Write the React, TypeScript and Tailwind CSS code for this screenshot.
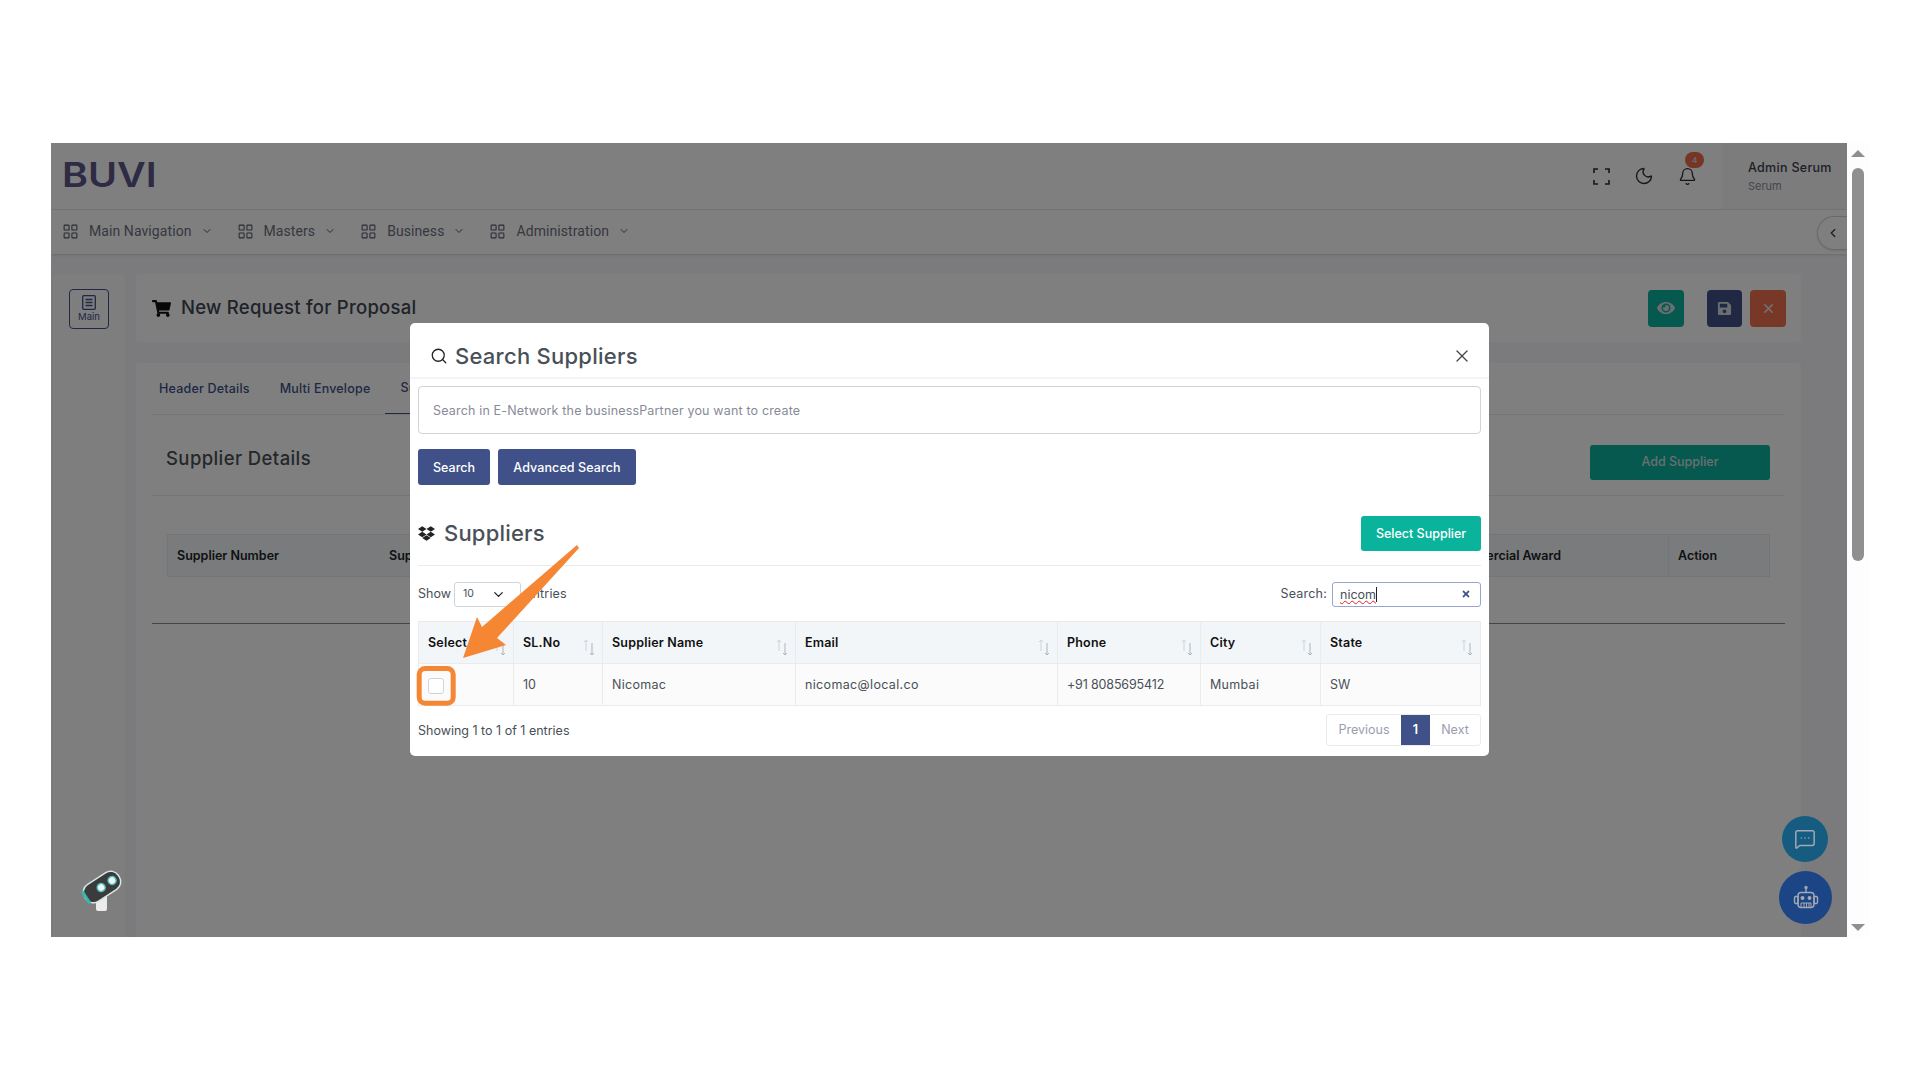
import { Bell, ChevronDown, ChevronLeft, LayoutGrid, MessageSquareMore, Moon, Search, X } from "lucide-react"
import { FaDropbox, FaEye, FaSave, FaShoppingCart, FaTimes } from "react-icons/fa"

const navItems = ["Main Navigation", "Masters", "Business", "Administration"]

const columns = [
    { label: "Select", value: "", width: "w-[95px]", cell: "" },
    { label: "SL.No", value: "10", width: "w-[89px]", cell: "" },
    { label: "Supplier Name", value: "Nicomac", width: "w-[193px]", cell: "tracking-[0.3px]" },
    { label: "Email", value: "nicomac@local.co", width: "w-[262px]", cell: "tracking-[0.35px]" },
    { label: "Phone", value: "+91 8085695412", width: "w-[143px]", cell: "tracking-[-0.15px]" },
    { label: "City", value: "Mumbai", width: "w-[120px]", cell: "tracking-[0.3px]" },
    { label: "State", value: "SW", width: "flex-1", cell: "" },
]

function SortArrows() {
    return (
        <svg className="absolute right-[7px] top-[17px]" width="12" height="17" viewBox="0 0 12 17" fill="none" strokeWidth="1">
            <path d="M3 12V1M1 3l2-2 2 2" stroke="#ced4da" />
            <path d="M9 4v12M7 14l2 2 2-2" stroke="#adb5bd" />
        </svg>
    )
}

function FullscreenIcon() {
    return (
        <svg width="17" height="17" viewBox="0 0 17 17" fill="none" stroke="#2c2c2c" strokeWidth="1.6">
            <path d="M1 5V1h4M12 1h4v4M16 12v4h-4M5 16H1v-4" />
        </svg>
    )
}

function ArticleIcon() {
    return (
        <svg width="14" height="15" viewBox="0 0 14 15" fill="none" stroke="#405189" strokeWidth="1.300">
            <rect x="0.700" y="0.700" width="12.600" height="13.600" rx="1" />
            <path d="M3.500 4.500h7M3.500 7.500h7M3.500 10.500h7" />
        </svg>
    )
}

function RobotIcon() {
    return (
        <svg width="28" height="28" viewBox="0 0 28 28" fill="none" stroke="#a3a9b5" strokeWidth="1.4">
            <rect x="6" y="8.500" width="16" height="15" rx="3" />
            <path d="M14 8.500V4M3.500 12.500h2.500v7H3.500a1.500 1.500 0 0 1-1-1.400v-4.200a1.500 1.500 0 0 1 1-1.400zM24.500 12.500H22v7h2.500a1.500 1.500 0 0 0 1-1.400v-4.200a1.500 1.500 0 0 0-1-1.400z" />
            <circle cx="14" cy="3.500" r="1" fill="#a3a9b5" />
            <circle cx="10.500" cy="14" r="1.300" fill="#a3a9b5" />
            <circle cx="17.500" cy="14" r="1.300" fill="#a3a9b5" />
            <path d="M9 23.500v-4.500h10v4.500M12 19v4.500M14.500 19v4.500M17 19v4.500" strokeWidth="1" />
        </svg>
    )
}

function CameraLogo() {
    return (
        <svg className="absolute left-[29px] top-[726px]" width="46" height="44" viewBox="0 0 46 44">
            <rect x="16" y="26" width="11" height="16" rx="2" fill="#ececec" />
            <g transform="rotate(-33 22 18)">
                <rect x="2" y="8" width="40" height="20" rx="9" fill="#3b3b3b" stroke="#d5e6e5" strokeWidth="1.500" />
                <path d="M3 12v12" stroke="#38b5ae" strokeWidth="3" strokeLinecap="round" />
                <circle cx="21" cy="18" r="4" fill="#f2f2f2" stroke="#46c0bb" strokeWidth="1.500" />
                <circle cx="34" cy="18" r="4" fill="#f2f2f2" stroke="#46c0bb" strokeWidth="1.500" />
            </g>
        </svg>
    )
}

function PageBehind() {
    return (
        <div className="w-full h-full bg-[#f6f6fa] flex flex-col">
            <header className="h-[67px] shrink-0 bg-white border-b border-[#e9ebec] flex items-center">
                <div className="ml-[11px] -mt-[2px] origin-left scale-x-[1.16] text-[34px] leading-none font-semibold text-[#5c5788] [font-family:'Inter',sans-serif]">
                    BUVI
                </div>
                <div className="ml-auto flex items-center gap-[24px] pr-[25px]">
                    <FullscreenIcon />
                    <Moon size={20} strokeWidth={1.6} color="#2c2c2c" />
                    <div className="relative">
                        <Bell size={19} strokeWidth={1.6} color="#2c2c2c" />
                        <span className="absolute -top-[15px] left-[7px] w-[19px] h-[16px] rounded-full bg-[#ee6a4a] text-[#d5d5d5] text-[9px] font-semibold flex items-center justify-center">
                            4
                        </span>
                    </div>
                </div>
                <div className="w-[125px] h-full bg-[#f8f8fb] pl-[26px] pt-[16px] [font-family:'Inter',sans-serif]">
                    <div className="text-[12.500px] leading-[18px] font-medium tracking-[0.3px] text-[#3a3f4b] whitespace-nowrap">Admin Serum</div>
                    <div className="text-[11px] leading-[18px] text-[#8a8d9c]">Serum</div>
                </div>
            </header>

            <nav className="relative h-[44px] shrink-0 bg-white shadow-sm flex items-center pl-[11px] pb-[2px] text-[#6d7080] [font-family:'Roboto',sans-serif] text-[14px] tracking-[0.08px]">
                {navItems.map((item) => (
                    <div key={item} className="flex items-center mr-[24px]">
                        <LayoutGrid size={17} strokeWidth={1.500} color="#555866" />
                        <span className="ml-[10px] whitespace-nowrap">{item}</span>
                        <ChevronDown size={12} className="ml-[9px]" color="#555866" />
                    </div>
                ))}
                <div className="absolute right-0 top-[6px] w-[30px] h-[34px] rounded-l-full bg-white border border-r-0 border-[#d5d5d5] shadow-sm flex items-center justify-center">
                    <ChevronLeft size={14} strokeWidth={2.500} color="#444" />
                </div>
            </nav>

            <div className="flex-1 flex pt-[20px] pl-[2px] pr-[46px] gap-[11px] min-h-0">
                <aside className="relative w-[72px] shrink-0 bg-[#fcfcfd] rounded-t-[4px]">
                    <div className="absolute left-[16px] top-[15px] w-[40px] h-[40px] rounded-[4px] border border-[#405189] flex flex-col items-center pt-[5px] text-[#405189]">
                        <ArticleIcon />
                        <span className="text-[9.500px] leading-[14px] [font-family:'Inter',sans-serif]">Main</span>
                    </div>
                </aside>

                <main className="flex-1 flex flex-col gap-[21px] [font-family:'Inter',sans-serif]">
                    <div className="h-[68px] shrink-0 bg-white rounded-[4px] flex items-center pl-[16px] pr-[15px]">
                        <FaShoppingCart size={19} color="#111" />
                        <h1 className="ml-[10px] text-[18.500px] font-medium tracking-[0.25px] text-[#404653]">New Request for Proposal</h1>
                        <div className="ml-auto flex items-center">
                            <div className="w-[36px] h-[37px] rounded-[4px] bg-[#0ab39c] flex items-center justify-center mr-[23px]">
                                <FaEye size={18} color="#d7dde0" />
                            </div>
                            <div className="w-[35px] h-[37px] rounded-[4px] bg-[#405189] flex items-center justify-center mr-[8px]">
                                <FaSave size={15} color="#d7dde0" />
                            </div>
                            <div className="w-[36px] h-[37px] rounded-[4px] bg-[#f0714f] flex items-center justify-center">
                                <X size={15} strokeWidth={2.500} color="#e5e5e5" />
                            </div>
                        </div>
                    </div>

                    <div className="flex-1 bg-white rounded-t-[4px] px-[16px]">
                        <div className="h-[52px] pt-[1px] flex items-stretch gap-[30px] pl-[7px] text-[12.500px] font-medium tracking-[0.2px] text-[#405189] border-b border-[#e9ebec]">
                            <span className="flex items-center">Header Details</span>
                            <span className="flex items-center">Multi Envelope</span>
                            <span className="flex items-center -ml-[15px] px-[15px] border-b border-[#405189]">Suppliers</span>
                        </div>
                        <div className="h-[81px] flex items-center justify-between pl-[14px] pr-[15px] border-b border-[#e9ebec]">
                            <h2 className="pt-[8px] text-[18.500px] font-medium tracking-[0.4px] text-[#495057]">Supplier Details</h2>
                            <div className="w-[180px] h-[35px] rounded-[3px] bg-[#0ab39c] mt-[15px] flex items-center justify-center text-[12.500px] font-medium text-[#d9dee0]">
                                Add Supplier
                            </div>
                        </div>
                        <div className="pt-[38px] px-[15px] pb-[46px] border-b border-[#878a99]">
                            <div className="h-[43px] pt-[1px] bg-[#f3f6f9] border border-[#e9ebec] flex items-stretch text-[12.500px] font-semibold text-[#212529]">
                                <div className="w-[221px] pl-[9px] flex items-center">Supplier Number</div>
                                <div className="flex-1 flex items-center">Supplier Name</div>
                                <div className="w-[231px] pl-[9px] flex items-center border-r border-[#e9ebec]">Commercial Award</div>
                                <div className="w-[100px] pl-[9px] flex items-center">Action</div>
                            </div>
                        </div>
                    </div>
                </main>
            </div>
        </div>
    )
}

function SearchModal() {
    return (
        <div className="absolute left-[359px] top-[180px] w-[1079px] h-[433px] bg-white rounded-[5px] [font-family:'Inter',sans-serif]">
            <div className="h-[56px] border-b-2 border-[#f3f5f7] flex items-center pt-[12px] pl-[20px] pr-[17px]">
                <Search size={18} strokeWidth={1.700} color="#222" />
                <h3 className="ml-[7px] text-[22px] font-medium tracking-[0.26px] text-[#495057]">Search Suppliers</h3>
                <X size={20} strokeWidth={1.500} color="#444" className="ml-auto" />
            </div>
            <div className="px-[8px]">
                <div className="mt-[7px] h-[48px] pt-[2px] border border-[#ced4da] rounded-[4px] flex items-center pl-[14px] text-[12.500px] tracking-[0.17px] text-[#878a99]">
                    Search in E-Network the businessPartner you want to create
                </div>
                <div className="mt-[15px] flex gap-[8px]">
                    <div className="w-[72px] h-[36px] pt-[2px] rounded-[3px] bg-[#405189] text-white text-[12.500px] font-medium flex items-center justify-center">Search</div>
                    <div className="w-[138px] h-[36px] pt-[2px] rounded-[3px] bg-[#405189] text-white text-[12.500px] font-medium tracking-[0.1px] flex items-center justify-center">Advanced Search</div>
                </div>
                <div className="mt-[31px] h-[50px] pb-[15px] flex items-center justify-between border-b border-[#e9ebec]">
                    <div className="flex items-center">
                        <FaDropbox size={17} color="#222" />
                        <span className="ml-[9px] text-[22px] font-medium tracking-[0.2px] text-[#495057]">Suppliers</span>
                    </div>
                    <div className="w-[120px] h-[35px] pt-[2px] rounded-[3px] bg-[#0ab39c] text-white text-[12.500px] font-medium flex items-center justify-center">Select Supplier</div>
                </div>
                <div className="mt-[15px] h-[26px] flex items-center text-[12.500px] text-[#495057]">
                    <span className="pt-[1px]">Show</span>
                    <div className="ml-[3px] w-[67px] h-[25px] border border-[#ced4da] rounded-[3px] flex items-center justify-between pl-[8px] pr-[14px] text-[10.500px]">
                        10
                        <ChevronDown size={15} color="#222" />
                    </div>
                    <span className="ml-[4px] pt-[1px] tracking-[0.2px]">entries</span>
                    <span className="ml-auto pt-[1px] tracking-[0.2px]">Search:</span>
                    <div className="ml-[5px] w-[149px] h-[25px] border border-[#9aa5ce] rounded-[3px] flex items-center justify-between pl-[7px] pr-[9px] text-[#495057]">
                        <span className="border-r border-[#222] leading-[15px] underline decoration-wavy decoration-[#e02020] decoration-1">nicom</span>
                        <FaTimes size={10} color="#405189" />
                    </div>
                </div>
                <div className="mt-[14px] border border-[#e9ebec] text-[12.500px]">
                    <div className="flex h-[42px] bg-[#f3f6f9] border-b border-[#e9ebec] font-semibold tracking-[0.2px] text-[#111]">
                        {columns.map((col, i) => (
                            <div key={col.label} className={`relative ${col.width} flex items-center pl-[9px] pt-[1px] ${i < 6 ? "border-r border-[#e9ebec]" : ""}`}>
                                {col.label}
                                <SortArrows />
                            </div>
                        ))}
                    </div>
                    <div className="flex h-[41px] bg-[#fbfbfb] text-[#495057]">
                        {columns.map((col, i) => (
                            <div key={col.label} className={`${col.width} ${col.cell} flex items-center pl-[9px] pt-[2px] ${i < 6 ? "border-r border-[#e9ebec]" : ""}`}>
                                {i === 0 ? <div className="w-[16px] h-[16px] mt-[1px] bg-white border border-[#ced4da] rounded-[3px]" /> : col.value}
                            </div>
                        ))}
                    </div>
                </div>
                <div className="mt-[8px] flex items-center justify-between text-[12.500px] text-[#495057]">
                    <span className="pt-[3px]">Showing 1 to 1 of 1 entries</span>
                    <div className="flex h-[32px] border border-[#e9ebec] rounded-[3px] text-[#9a9db0]">
                        <div className="w-[74px] flex items-center justify-center">Previous</div>
                        <div className="w-[29px] bg-[#405189] text-white font-semibold flex items-center justify-center">1</div>
                        <div className="w-[50px] flex items-center justify-center">Next</div>
                    </div>
                </div>
            </div>
        </div>
    )
}

function Annotation() {
    return (
        <svg className="absolute left-0 top-0 pointer-events-none" width="1796" height="794" viewBox="0 0 1796 794">
            <polygon points="526,402 528,405 446,495 455,502 412,515 426,474 431,484" fill="#f58634" />
            <rect x="368.200" y="525.500" width="34" height="34.700" rx="6" fill="none" stroke="#f58634" strokeWidth="5" />
        </svg>
    )
}

function Scrollbar() {
    return (
        <div className="relative w-[22px] h-full bg-[#fdfdfd] flex flex-col items-center">
            <div className="mt-[7px] w-0 h-0 border-x-[7px] border-x-transparent border-b-[7px] border-b-[#8f8f8f]" />
            <div className="mt-[11px] w-[12px] h-[393px] rounded-full bg-[#8f8f8f]" />
            <div className="mt-auto mb-[6px] w-0 h-0 border-x-[7px] border-x-transparent border-t-[7px] border-t-[#8f8f8f]" />
        </div>
    )
}

export default function App() {
    return (
        <div className="w-[1920px] h-[1080px] bg-white pt-[143px] pl-[51px]">
            <div className="flex h-[794px]">
                <div className="relative w-[1796px] h-full overflow-hidden">
                    <PageBehind />
                    <div className="absolute inset-0 bg-black/50" />
                    <CameraLogo />
                    <SearchModal />
                    <Annotation />
                    <div className="absolute left-[1731px] top-[673px] w-[46px] h-[46px] rounded-full bg-[#165c80] flex items-center justify-center">
                        <MessageSquareMore size={22} strokeWidth={1.600} color="#a3a9b5" />
                    </div>
                    <div className="absolute left-[1728px] top-[728px] w-[53px] h-[53px] rounded-full bg-[#1c4585] flex items-center justify-center">
                        <RobotIcon />
                    </div>
                </div>
                <Scrollbar />
            </div>
        </div>
    )
}
